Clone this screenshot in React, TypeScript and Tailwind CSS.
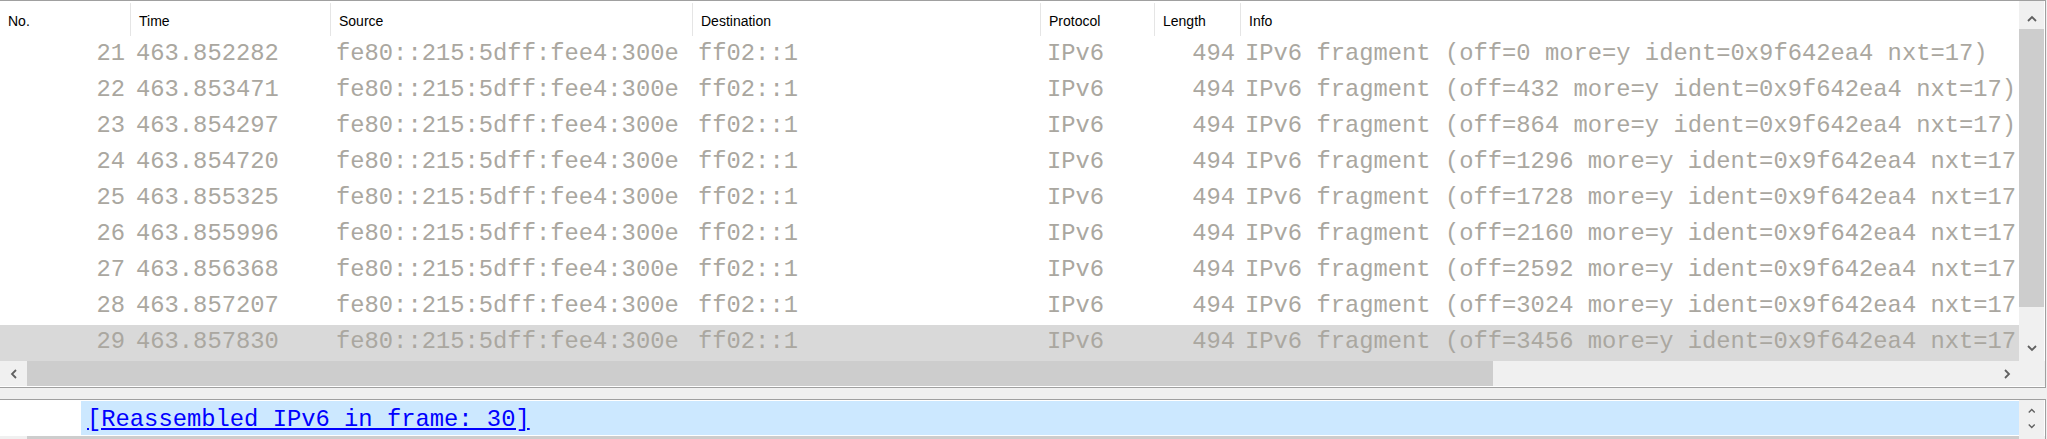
import React from "react";

const cols = [
  { key: "no", label: "No.", w: "w-[131px]" },
  { key: "time", label: "Time", w: "w-[200px]" },
  { key: "src", label: "Source", w: "w-[362px]" },
  { key: "dst", label: "Destination", w: "w-[348px]" },
  { key: "proto", label: "Protocol", w: "w-[114px]" },
  { key: "len", label: "Length", w: "w-[86px]" },
];

const packets: [number, string, number][] = [
  [21, "463.852282", 0],
  [22, "463.853471", 432],
  [23, "463.854297", 864],
  [24, "463.854720", 1296],
  [25, "463.855325", 1728],
  [26, "463.855996", 2160],
  [27, "463.856368", 2592],
  [28, "463.857207", 3024],
  [29, "463.857830", 3456],
];

function Chevron({ dir, small }: { dir: "up" | "down" | "left" | "right"; small?: boolean }) {
  const s = small ? 0.75 : 1;
  if (dir === "up" || dir === "down") {
    const pts = dir === "up" ? "1,6 5,2 9,6" : "1,2 5,6 9,2";
    return (
      <svg width={10 * s} height={8 * s} viewBox="0 0 10 8">
        <polyline points={pts} fill="none" stroke="#606060" strokeWidth="1.8" />
      </svg>
    );
  }
  const pts = dir === "left" ? "6,1 2,5 6,9" : "2,1 6,5 2,9";
  return (
    <svg width={8 * s} height={10 * s} viewBox="0 0 8 10">
      <polyline points={pts} fill="none" stroke="#606060" strokeWidth="1.8" />
    </svg>
  );
}

export default function App() {
  const mono = "font-['Liberation_Mono',monospace] text-[23.8px]";
  return (
    <div className="w-[2047px] h-[439px] bg-[#f0f0f0] overflow-hidden flex flex-col">
      {/* packet list */}
      <div className="w-[2046px] h-[388px] bg-white border-t border-r border-b border-[#a0a0a0] flex flex-col">
        <div className="flex h-[360px]">
          <div className="w-[2019px] overflow-hidden flex flex-col">
            <div className="flex h-[36px] font-['Liberation_Sans',sans-serif] text-[14px] text-black">
              {cols.map((c) => (
                <div key={c.key} className={`${c.w} shrink-0 flex items-center justify-between`}>
                  <span className="pl-[8px] pt-[4px]">{c.label}</span>
                  <div className="w-px h-[33px] bg-[#e5e5e5] mt-[1px]" />
                </div>
              ))}
              <div className="flex-1 flex items-center">
                <span className="pl-[8px] pt-[4px]">Info</span>
              </div>
            </div>
            {packets.map(([no, time, off]) => (
              <div
                key={no}
                className={`flex h-[36px] shrink-0 whitespace-nowrap ${mono} leading-[33px] text-[#aaa7a0] ${
                  no === 29 ? "bg-[#d9d9d9]" : ""
                }`}
              >
                <div className="w-[131px] shrink-0 text-right pr-[6px]">{no}</div>
                <div className="w-[200px] shrink-0 pl-[5px]">{time}</div>
                <div className="w-[362px] shrink-0 pl-[5px]">fe80::215:5dff:fee4:300e</div>
                <div className="w-[348px] shrink-0 pl-[5px]">ff02::1</div>
                <div className="w-[114px] shrink-0 pl-[6px]">IPv6</div>
                <div className="w-[86px] shrink-0 text-right pr-[6px]">494</div>
                <div className="flex-1 pl-[4px] overflow-hidden">
                  {`IPv6 fragment (off=${off} more=y ident=0x9f642ea4 nxt=17)`}
                </div>
              </div>
            ))}
          </div>
          {/* vertical scrollbar */}
          <div className="w-[25px] bg-[#f0f0f0] flex flex-col">
            <div className="h-[28px] flex justify-center pt-[14px]">
              <Chevron dir="up" />
            </div>
            <div className="h-[278px] bg-[#cdcdcd]" />
            <div className="flex-1" />
            <div className="h-[26px] flex items-center justify-center">
              <Chevron dir="down" />
            </div>
          </div>
        </div>
        {/* horizontal scrollbar */}
        <div className="flex h-[25px] bg-[#f0f0f0]">
          <div className="w-[27px] flex items-center justify-center">
            <Chevron dir="left" />
          </div>
          <div className="w-[1466px] bg-[#cdcdcd]" />
          <div className="flex-1" />
          <div className="w-[24px] flex items-center justify-center">
            <Chevron dir="right" />
          </div>
          <div className="w-[26px]" />
        </div>
      </div>

      <div className="h-[11px]" />

      {/* packet details */}
      <div className="w-[2046px] flex-1 bg-white border-t border-r border-[#a0a0a0] flex flex-col">
        <div className="flex h-[36px]">
          <div className="w-[2019px] pt-px pl-[81px]">
            <div className="h-[34px] bg-[#cce8ff] pl-[6px] whitespace-nowrap">
              <span className={`${mono} leading-[37px] text-[#0000ff] underline`}>
                [Reassembled IPv6 in frame: 30]
              </span>
            </div>
          </div>
          <div className="w-[25px] bg-[#f0f0f0] flex flex-col items-center justify-center gap-[9px]">
            <Chevron dir="up" small />
            <Chevron dir="down" small />
          </div>
        </div>
        <div className="flex flex-1">
          <div className="w-[27px] bg-[#f0f0f0]" />
          <div className="w-[1992px] bg-[#cdcdcd]" />
          <div className="flex-1 bg-[#f0f0f0]" />
        </div>
      </div>
    </div>
  );
}
